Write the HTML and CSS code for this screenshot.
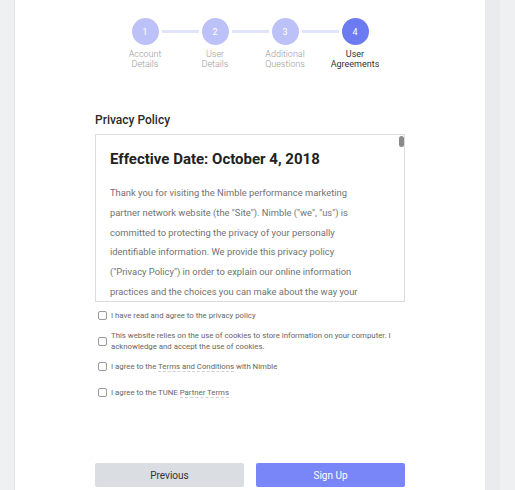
FILE: index.html
```html
<!DOCTYPE html>
<html>
<head>
<meta charset="utf-8">
<link rel="stylesheet" href="styles.css">
</head>
<body>
<div class="page">
  <main class="card">
    <div class="stepper">
      <div class="dots">
        <span class="dot">1</span><span class="bar"></span>
        <span class="dot">2</span><span class="bar"></span>
        <span class="dot">3</span><span class="bar"></span>
        <span class="dot active">4</span>
      </div>
      <div class="labels">
        <span class="label">Account<br>Details</span>
        <span class="label">User<br>Details</span>
        <span class="label">Additional<br>Questions</span>
        <span class="label active">User<br>Agreements</span>
      </div>
    </div>

    <h2 class="section-title">Privacy Policy</h2>
    <div class="policy">
      <div class="policy-inner">
        <h3 class="policy-heading">Effective Date: October 4, 2018</h3>
        <p class="policy-text">Thank you for visiting the Nimble performance marketing partner network website (the "Site"). Nimble ("we", "us") is committed to protecting the privacy of your personally identifiable information. We provide this privacy policy ("Privacy Policy") in order to explain our online information practices and the choices you can make about the way your information is collected and used.</p>
      </div>
      <span class="thumb"></span>
    </div>

    <div class="checks">
      <label class="check"><span class="box"></span><span class="text">I have read and agree to the privacy policy</span></label>
      <label class="check"><span class="box"></span><span class="text">This website relies on the use of cookies to store information on your computer. I acknowledge and accept the use of cookies.</span></label>
      <label class="check"><span class="box"></span><span class="text">I agree to the <span class="link">Terms and Conditions</span> with Nimble</span></label>
      <label class="check"><span class="box"></span><span class="text">I agree to the TUNE <span class="link">Partner Terms</span></span></label>
    </div>

    <div class="actions">
      <button class="btn prev">Previous</button>
      <button class="btn next">Sign Up</button>
    </div>
  </main>
  <div class="rail"></div>
</div>
</body>
</html>
```

FILE: styles.css
```css
* { box-sizing: border-box; }
html, body { margin: 0; padding: 0; }
body {
  background: #eef0f2;
  font-family: Roboto, "Liberation Sans", Arial, sans-serif;
  width: 515px;
  height: 490px;
  overflow: hidden;
}
.page {
  display: flex;
  height: 490px;
}
.card {
  margin-left: 14px;
  width: 471px;
  background: #fff;
  border-left: 1px solid #e2e4e7;
  padding: 18px 80px 0 80px;
  display: flex;
  flex-direction: column;
}
.rail {
  width: 15px;
  background: #e9ebee;
}
.stepper { display: flex; flex-direction: column; align-items: center; }
.dots { display: flex; align-items: center; }
.dot {
  width: 27px; height: 27px; border-radius: 50%;
  background: #bcc2f8; color: #fff;
  font-size: 9px; display: flex; align-items: center; justify-content: center;
}
.dot.active { background: #6d7bf0; }
.bar { width: 37px; height: 3px; margin: 0 3px; background: #e1e3f8; }
.labels { display: flex; margin-top: 4px; }
.label {
  width: 70px; text-align: center;
  font-size: 9px; line-height: 10px; color: #9a9a9a; font-weight: 300;
}
.label.active { color: #333; font-weight: 400; }

.section-title {
  margin: 44px 0 0 0;
  font-size: 12px; line-height: 14px; font-weight: 500; color: #2a2a2a;
}
.policy {
  position: relative;
  margin-top: 7px;
  height: 168px;
  border: 1px solid #dcdcdc;
  overflow: hidden;
}
.policy-inner { padding: 14px 40px 0 14px; }
.policy-heading {
  margin: 0; font-size: 15px; line-height: 20px; font-weight: 700; color: #222;
}
.policy-text {
  margin: 14px 0 0 0;
  font-size: 9.4px; line-height: 19.8px; color: #727272;
}
.thumb {
  position: absolute; right: 0; top: 1px;
  width: 5px; height: 11px; border-radius: 3px; background: #8a8a8a;
}
.checks {
  display: flex; flex-direction: column; gap: 9px;
  margin-top: 8px;
}
.check { display: flex; align-items: center; gap: 4px; padding-left: 3px; }
.box {
  flex: none; width: 9px; height: 9px; border: 1px solid #9a9a9a; border-radius: 2px; background: #fff;
}
.text { font-size: 7.8px; line-height: 11px; color: #666; }
.link { border-bottom: 1px dashed #d0d0d0; }
.check:nth-child(4) { margin-top: 6px; }

.actions {
  display: flex; gap: 12px; margin-top: 65px;
}
.btn {
  flex: 1; height: 24px; border: none; border-radius: 2px;
  font-family: inherit; font-size: 10px;
}
.prev { background: #dadde1; color: #333; }
.next { background: #7886f7; color: #fff; }
```
